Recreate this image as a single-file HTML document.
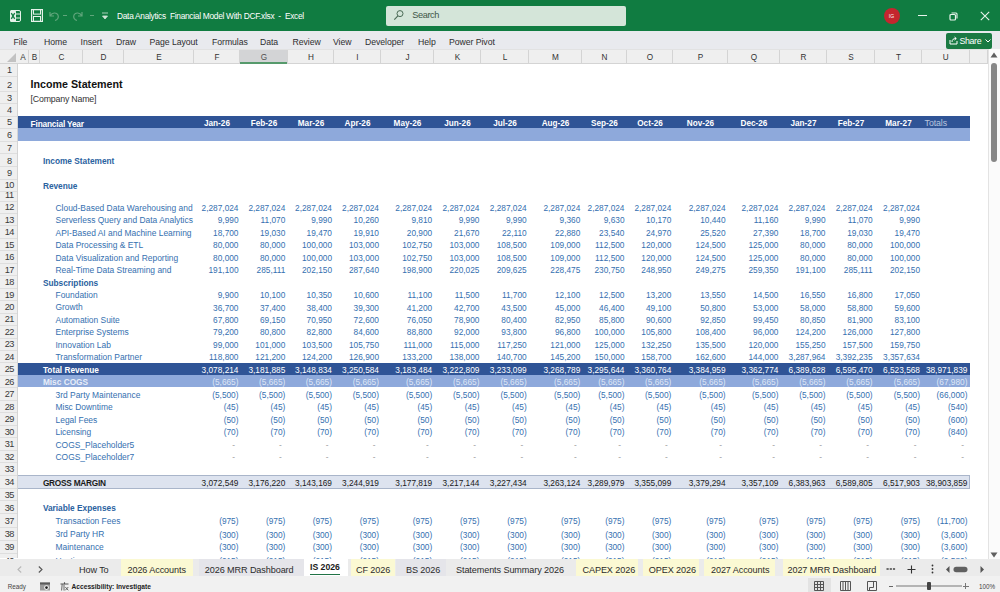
<!DOCTYPE html>
<html><head><meta charset="utf-8"><title>Excel</title>
<style>
html,body{margin:0;padding:0;}
body{width:1000px;height:592px;position:relative;overflow:hidden;background:#ffffff;font-family:"Liberation Sans", sans-serif;}
.r{position:absolute;}
.t{position:absolute;white-space:nowrap;}
</style></head><body>
<div class="r" style="left:0px;top:0px;width:1000px;height:31px;background:#107c41;"></div>
<svg class="r" style="left:10px;top:9.5px" width="11" height="12" viewBox="0 0 11 12"><rect x="0.5" y="0.5" width="10" height="11" rx="1.5" fill="none" stroke="#e6f2ea" stroke-width="1"/><rect x="0" y="0" width="6" height="12" rx="1.5" fill="#e6f2ea"/><path d="M1.3 3.2 L4.7 8.8 M4.7 3.2 L1.3 8.8" stroke="#107c41" stroke-width="1.3"/><path d="M6 4 H10 M6 8 H10" stroke="#e6f2ea" stroke-width="1"/></svg>
<svg class="r" style="left:31px;top:9px" width="12" height="13" viewBox="0 0 12 13"><rect x="0.6" y="0.6" width="10.8" height="11.8" fill="none" stroke="#e6f2ea" stroke-width="1.2"/><rect x="2.5" y="0.6" width="7" height="4.5" fill="none" stroke="#e6f2ea" stroke-width="1"/><rect x="2.5" y="7.5" width="7" height="4.9" fill="none" stroke="#e6f2ea" stroke-width="1"/></svg>
<svg class="r" style="left:47px;top:9px" width="64" height="13" viewBox="0 0 64 13"><path d="M3 3 V7 H7 M3.5 6.5 C5 3.5 9.5 3 11 6 C12 8.5 10.5 11 8 11.5" fill="none" stroke="#5fa57b" stroke-width="1.2"/><path d="M16 6.5 H20" stroke="#5fa57b" stroke-width="1"/><path d="M35 3 V7 H31 M34.5 6.5 C33 3.5 28.5 3 27 6 C26 8.5 27.5 11 30 11.5" fill="none" stroke="#5fa57b" stroke-width="1.2"/><path d="M43 6.5 H47" stroke="#5fa57b" stroke-width="1"/><path d="M55 4 H61 M55.5 7 L58 10 L60.5 7 Z" fill="#cfe5d7" stroke="#cfe5d7" stroke-width="0.8"/></svg>
<div class="t" style="left:117.00px;top:11.69px;font-size:8.4px;line-height:8.4px;color:#ffffff;letter-spacing:-0.3px;">Data Analytics &nbsp;Financial Model With DCF.xlsx &nbsp;- &nbsp;Excel</div>
<div class="r" style="left:385.5px;top:5.5px;width:240.0px;height:20.0px;background:#d4e5d9;border-radius:2px;"></div>
<svg class="r" style="left:393px;top:9px" width="11" height="12" viewBox="0 0 11 12"><circle cx="7" cy="4.6" r="3" fill="none" stroke="#4a6a55" stroke-width="1"/><path d="M4.9 6.8 L1.3 10.6" stroke="#4a6a55" stroke-width="1.1"/></svg>
<div class="t" style="left:412.30px;top:10.61px;font-size:9.2px;line-height:9.2px;color:#3d5646;letter-spacing:-0.4px;">Search</div>
<div class="r" style="left:883.5px;top:7.5px;width:16px;height:16px;border-radius:50%;background:#c4262e;"></div>
<div class="t" style="left:791.50px;width:200px;text-align:center;top:13.77px;font-size:5px;line-height:5px;color:#ffffff;">IG</div>
<div class="r" style="left:918px;top:15px;width:8.5px;height:1px;background:#e8f3ec;"></div>
<svg class="r" style="left:949px;top:11.5px" width="9" height="9" viewBox="0 0 9 9"><rect x="1" y="2.5" width="5.5" height="5.5" rx="1" fill="none" stroke="#e8f3ec" stroke-width="1.2"/><path d="M2.5 1 H7 A1 1 0 0 1 8 2 V6.5" fill="none" stroke="#e8f3ec" stroke-width="1.1"/></svg>
<svg class="r" style="left:980px;top:10.5px" width="10" height="10" viewBox="0 0 10 10"><path d="M0.8 0.8 L9.2 9.2 M9.2 0.8 L0.8 9.2" stroke="#e8f3ec" stroke-width="1.1"/></svg>
<div class="r" style="left:0px;top:31px;width:1000px;height:18px;background:#e9eaee;"></div>
<div class="t" style="left:13.50px;top:38.04px;font-size:8.7px;line-height:8.7px;color:#2e2e2e;letter-spacing:-0.05px;">File</div>
<div class="t" style="left:44.00px;top:38.04px;font-size:8.7px;line-height:8.7px;color:#2e2e2e;letter-spacing:-0.05px;">Home</div>
<div class="t" style="left:80.60px;top:38.04px;font-size:8.7px;line-height:8.7px;color:#2e2e2e;letter-spacing:-0.05px;">Insert</div>
<div class="t" style="left:116.00px;top:38.04px;font-size:8.7px;line-height:8.7px;color:#2e2e2e;letter-spacing:-0.05px;">Draw</div>
<div class="t" style="left:149.50px;top:38.04px;font-size:8.7px;line-height:8.7px;color:#2e2e2e;letter-spacing:-0.05px;">Page Layout</div>
<div class="t" style="left:212.00px;top:38.04px;font-size:8.7px;line-height:8.7px;color:#2e2e2e;letter-spacing:-0.05px;">Formulas</div>
<div class="t" style="left:260.00px;top:38.04px;font-size:8.7px;line-height:8.7px;color:#2e2e2e;letter-spacing:-0.05px;">Data</div>
<div class="t" style="left:292.50px;top:38.04px;font-size:8.7px;line-height:8.7px;color:#2e2e2e;letter-spacing:-0.05px;">Review</div>
<div class="t" style="left:333.00px;top:38.04px;font-size:8.7px;line-height:8.7px;color:#2e2e2e;letter-spacing:-0.05px;">View</div>
<div class="t" style="left:365.00px;top:38.04px;font-size:8.7px;line-height:8.7px;color:#2e2e2e;letter-spacing:-0.05px;">Developer</div>
<div class="t" style="left:418.00px;top:38.04px;font-size:8.7px;line-height:8.7px;color:#2e2e2e;letter-spacing:-0.05px;">Help</div>
<div class="t" style="left:449.00px;top:38.04px;font-size:8.7px;line-height:8.7px;color:#2e2e2e;letter-spacing:-0.05px;">Power Pivot</div>
<div class="r" style="left:946px;top:33px;width:46px;height:15.5px;background:#1a7a43;border-radius:2px;"></div>
<svg class="r" style="left:949px;top:36px" width="9" height="9" viewBox="0 0 9 9"><path d="M1 4 V8 H8 V5" fill="none" stroke="#ffffff" stroke-width="1"/><path d="M3 6 C3 3.5 4.5 2.5 7 2.5 M5.5 1 L7.3 2.5 L5.5 4" fill="none" stroke="#ffffff" stroke-width="1"/></svg>
<div class="t" style="left:959.50px;top:37.07px;font-size:8.9px;line-height:8.9px;color:#ffffff;letter-spacing:-0.4px;">Share</div>
<svg class="r" style="left:985px;top:39px" width="6" height="4" viewBox="0 0 6 4"><path d="M0.5 0.5 L3 3 L5.5 0.5" fill="none" stroke="#ffffff" stroke-width="1"/></svg>
<div class="r" style="left:0px;top:49px;width:988px;height:14.5px;background:#efefef;"></div>
<div class="r" style="left:0px;top:49px;width:988px;height:1px;background:#e2e2e2;"></div>
<div class="r" style="left:0px;top:63px;width:988px;height:1px;background:#d4d4d4;"></div>
<div class="r" style="left:28.3px;top:50px;width:1px;height:13.5px;background:#d4d4d4"></div>
<div class="t" style="left:-77.00px;width:200px;text-align:center;top:53.66px;font-size:8.2px;line-height:8.2px;color:#333333;">A</div>
<div class="r" style="left:39.3px;top:50px;width:1px;height:13.5px;background:#d4d4d4"></div>
<div class="t" style="left:-65.50px;width:200px;text-align:center;top:53.66px;font-size:8.2px;line-height:8.2px;color:#333333;">B</div>
<div class="r" style="left:82.3px;top:50px;width:1px;height:13.5px;background:#d4d4d4"></div>
<div class="t" style="left:-38.50px;width:200px;text-align:center;top:53.66px;font-size:8.2px;line-height:8.2px;color:#333333;">C</div>
<div class="r" style="left:123.3px;top:50px;width:1px;height:13.5px;background:#d4d4d4"></div>
<div class="t" style="left:3.50px;width:200px;text-align:center;top:53.66px;font-size:8.2px;line-height:8.2px;color:#333333;">D</div>
<div class="r" style="left:193.3px;top:50px;width:1px;height:13.5px;background:#d4d4d4"></div>
<div class="t" style="left:59.00px;width:200px;text-align:center;top:53.66px;font-size:8.2px;line-height:8.2px;color:#333333;">E</div>
<div class="r" style="left:239.3px;top:50px;width:1px;height:13.5px;background:#d4d4d4"></div>
<div class="t" style="left:117.00px;width:200px;text-align:center;top:53.66px;font-size:8.2px;line-height:8.2px;color:#333333;">F</div>
<div class="r" style="left:240px;top:50px;width:48px;height:12px;background:#d3d4d6;"></div>
<div class="r" style="left:240px;top:62px;width:48px;height:2px;background:#569a6c;"></div>
<div class="r" style="left:287.3px;top:50px;width:1px;height:13.5px;background:#d4d4d4"></div>
<div class="t" style="left:164.00px;width:200px;text-align:center;top:53.66px;font-size:8.2px;line-height:8.2px;color:#505050;">G</div>
<div class="r" style="left:333.3px;top:50px;width:1px;height:13.5px;background:#d4d4d4"></div>
<div class="t" style="left:211.00px;width:200px;text-align:center;top:53.66px;font-size:8.2px;line-height:8.2px;color:#333333;">H</div>
<div class="r" style="left:380.3px;top:50px;width:1px;height:13.5px;background:#d4d4d4"></div>
<div class="t" style="left:257.50px;width:200px;text-align:center;top:53.66px;font-size:8.2px;line-height:8.2px;color:#333333;">I</div>
<div class="r" style="left:433.3px;top:50px;width:1px;height:13.5px;background:#d4d4d4"></div>
<div class="t" style="left:307.50px;width:200px;text-align:center;top:53.66px;font-size:8.2px;line-height:8.2px;color:#333333;">J</div>
<div class="r" style="left:480.3px;top:50px;width:1px;height:13.5px;background:#d4d4d4"></div>
<div class="t" style="left:357.50px;width:200px;text-align:center;top:53.66px;font-size:8.2px;line-height:8.2px;color:#333333;">K</div>
<div class="r" style="left:528.3px;top:50px;width:1px;height:13.5px;background:#d4d4d4"></div>
<div class="t" style="left:405.00px;width:200px;text-align:center;top:53.66px;font-size:8.2px;line-height:8.2px;color:#333333;">L</div>
<div class="r" style="left:581.3px;top:50px;width:1px;height:13.5px;background:#d4d4d4"></div>
<div class="t" style="left:455.50px;width:200px;text-align:center;top:53.66px;font-size:8.2px;line-height:8.2px;color:#333333;">M</div>
<div class="r" style="left:626.3px;top:50px;width:1px;height:13.5px;background:#d4d4d4"></div>
<div class="t" style="left:504.50px;width:200px;text-align:center;top:53.66px;font-size:8.2px;line-height:8.2px;color:#333333;">N</div>
<div class="r" style="left:672.3px;top:50px;width:1px;height:13.5px;background:#d4d4d4"></div>
<div class="t" style="left:550.00px;width:200px;text-align:center;top:53.66px;font-size:8.2px;line-height:8.2px;color:#333333;">O</div>
<div class="r" style="left:727.3px;top:50px;width:1px;height:13.5px;background:#d4d4d4"></div>
<div class="t" style="left:600.50px;width:200px;text-align:center;top:53.66px;font-size:8.2px;line-height:8.2px;color:#333333;">P</div>
<div class="r" style="left:779.3px;top:50px;width:1px;height:13.5px;background:#d4d4d4"></div>
<div class="t" style="left:654.00px;width:200px;text-align:center;top:53.66px;font-size:8.2px;line-height:8.2px;color:#333333;">Q</div>
<div class="r" style="left:826.3px;top:50px;width:1px;height:13.5px;background:#d4d4d4"></div>
<div class="t" style="left:703.50px;width:200px;text-align:center;top:53.66px;font-size:8.2px;line-height:8.2px;color:#333333;">R</div>
<div class="r" style="left:874.3px;top:50px;width:1px;height:13.5px;background:#d4d4d4"></div>
<div class="t" style="left:751.00px;width:200px;text-align:center;top:53.66px;font-size:8.2px;line-height:8.2px;color:#333333;">S</div>
<div class="r" style="left:921.3px;top:50px;width:1px;height:13.5px;background:#d4d4d4"></div>
<div class="t" style="left:798.50px;width:200px;text-align:center;top:53.66px;font-size:8.2px;line-height:8.2px;color:#333333;">T</div>
<div class="r" style="left:968.8px;top:50px;width:1px;height:13.5px;background:#d4d4d4"></div>
<div class="t" style="left:845.75px;width:200px;text-align:center;top:53.66px;font-size:8.2px;line-height:8.2px;color:#333333;">U</div>
<div class="r" style="left:987.3px;top:50px;width:1px;height:13.5px;background:#d4d4d4"></div>
<svg class="r" style="left:7px;top:53px" width="9" height="9" viewBox="0 0 9 9"><path d="M9 0 L9 9 L0 9 Z" fill="#c2c2c2"/></svg>
<div class="r" style="left:0px;top:63.5px;width:17.5px;height:494.5px;background:#efefef;"></div>
<div class="r" style="left:17px;top:63.5px;width:1px;height:494.5px;background:#d4d4d4;"></div>
<div class="r" style="left:0px;top:75.8px;width:17px;height:1px;background:#dedede"></div>
<div class="t" style="left:-90.70px;width:200px;text-align:center;top:66.21px;font-size:9.2px;line-height:9.2px;color:#3a3a3a;letter-spacing:-0.45px;">1</div>
<div class="r" style="left:0px;top:90.8px;width:17px;height:1px;background:#dedede"></div>
<div class="t" style="left:-90.70px;width:200px;text-align:center;top:80.51px;font-size:9.2px;line-height:9.2px;color:#3a3a3a;letter-spacing:-0.45px;">2</div>
<div class="r" style="left:0px;top:103.3px;width:17px;height:1px;background:#dedede"></div>
<div class="t" style="left:-90.70px;width:200px;text-align:center;top:93.71px;font-size:9.2px;line-height:9.2px;color:#3a3a3a;letter-spacing:-0.45px;">3</div>
<div class="r" style="left:0px;top:115.8px;width:17px;height:1px;background:#dedede"></div>
<div class="t" style="left:-90.70px;width:200px;text-align:center;top:106.21px;font-size:9.2px;line-height:9.2px;color:#3a3a3a;letter-spacing:-0.45px;">4</div>
<div class="r" style="left:0px;top:128.0px;width:17px;height:1px;background:#dedede"></div>
<div class="t" style="left:-90.70px;width:200px;text-align:center;top:118.41px;font-size:9.2px;line-height:9.2px;color:#3a3a3a;letter-spacing:-0.45px;">5</div>
<div class="r" style="left:0px;top:140.6px;width:17px;height:1px;background:#dedede"></div>
<div class="t" style="left:-90.70px;width:200px;text-align:center;top:131.01px;font-size:9.2px;line-height:9.2px;color:#3a3a3a;letter-spacing:-0.45px;">6</div>
<div class="r" style="left:0px;top:153.3px;width:17px;height:1px;background:#dedede"></div>
<div class="t" style="left:-90.70px;width:200px;text-align:center;top:143.71px;font-size:9.2px;line-height:9.2px;color:#3a3a3a;letter-spacing:-0.45px;">7</div>
<div class="r" style="left:0px;top:166.3px;width:17px;height:1px;background:#dedede"></div>
<div class="t" style="left:-90.70px;width:200px;text-align:center;top:156.71px;font-size:9.2px;line-height:9.2px;color:#3a3a3a;letter-spacing:-0.45px;">8</div>
<div class="r" style="left:0px;top:178.6px;width:17px;height:1px;background:#dedede"></div>
<div class="t" style="left:-90.70px;width:200px;text-align:center;top:169.01px;font-size:9.2px;line-height:9.2px;color:#3a3a3a;letter-spacing:-0.45px;">9</div>
<div class="r" style="left:0px;top:190.9px;width:17px;height:1px;background:#dedede"></div>
<div class="t" style="left:-90.70px;width:200px;text-align:center;top:181.31px;font-size:9.2px;line-height:9.2px;color:#3a3a3a;letter-spacing:-0.45px;">10</div>
<div class="r" style="left:0px;top:200.5px;width:17px;height:1px;background:#dedede"></div>
<div class="t" style="left:-90.70px;width:200px;text-align:center;top:190.91px;font-size:9.2px;line-height:9.2px;color:#3a3a3a;letter-spacing:-0.45px;">11</div>
<div class="r" style="left:0px;top:212.8px;width:17px;height:1px;background:#dedede"></div>
<div class="t" style="left:-90.70px;width:200px;text-align:center;top:203.21px;font-size:9.2px;line-height:9.2px;color:#3a3a3a;letter-spacing:-0.45px;">12</div>
<div class="r" style="left:0px;top:225.3px;width:17px;height:1px;background:#dedede"></div>
<div class="t" style="left:-90.70px;width:200px;text-align:center;top:215.68px;font-size:9.2px;line-height:9.2px;color:#3a3a3a;letter-spacing:-0.45px;">13</div>
<div class="r" style="left:0px;top:237.7px;width:17px;height:1px;background:#dedede"></div>
<div class="t" style="left:-90.70px;width:200px;text-align:center;top:228.15px;font-size:9.2px;line-height:9.2px;color:#3a3a3a;letter-spacing:-0.45px;">14</div>
<div class="r" style="left:0px;top:250.2px;width:17px;height:1px;background:#dedede"></div>
<div class="t" style="left:-90.70px;width:200px;text-align:center;top:240.62px;font-size:9.2px;line-height:9.2px;color:#3a3a3a;letter-spacing:-0.45px;">15</div>
<div class="r" style="left:0px;top:262.7px;width:17px;height:1px;background:#dedede"></div>
<div class="t" style="left:-90.70px;width:200px;text-align:center;top:253.09px;font-size:9.2px;line-height:9.2px;color:#3a3a3a;letter-spacing:-0.45px;">16</div>
<div class="r" style="left:0px;top:275.2px;width:17px;height:1px;background:#dedede"></div>
<div class="t" style="left:-90.70px;width:200px;text-align:center;top:265.56px;font-size:9.2px;line-height:9.2px;color:#3a3a3a;letter-spacing:-0.45px;">17</div>
<div class="r" style="left:0px;top:287.6px;width:17px;height:1px;background:#dedede"></div>
<div class="t" style="left:-90.70px;width:200px;text-align:center;top:278.03px;font-size:9.2px;line-height:9.2px;color:#3a3a3a;letter-spacing:-0.45px;">18</div>
<div class="r" style="left:0px;top:300.1px;width:17px;height:1px;background:#dedede"></div>
<div class="t" style="left:-90.70px;width:200px;text-align:center;top:290.50px;font-size:9.2px;line-height:9.2px;color:#3a3a3a;letter-spacing:-0.45px;">19</div>
<div class="r" style="left:0px;top:312.6px;width:17px;height:1px;background:#dedede"></div>
<div class="t" style="left:-90.70px;width:200px;text-align:center;top:302.97px;font-size:9.2px;line-height:9.2px;color:#3a3a3a;letter-spacing:-0.45px;">20</div>
<div class="r" style="left:0px;top:325.0px;width:17px;height:1px;background:#dedede"></div>
<div class="t" style="left:-90.70px;width:200px;text-align:center;top:315.44px;font-size:9.2px;line-height:9.2px;color:#3a3a3a;letter-spacing:-0.45px;">21</div>
<div class="r" style="left:0px;top:337.5px;width:17px;height:1px;background:#dedede"></div>
<div class="t" style="left:-90.70px;width:200px;text-align:center;top:327.91px;font-size:9.2px;line-height:9.2px;color:#3a3a3a;letter-spacing:-0.45px;">22</div>
<div class="r" style="left:0px;top:350.0px;width:17px;height:1px;background:#dedede"></div>
<div class="t" style="left:-90.70px;width:200px;text-align:center;top:340.38px;font-size:9.2px;line-height:9.2px;color:#3a3a3a;letter-spacing:-0.45px;">23</div>
<div class="r" style="left:0px;top:362.4px;width:17px;height:1px;background:#dedede"></div>
<div class="t" style="left:-90.70px;width:200px;text-align:center;top:352.85px;font-size:9.2px;line-height:9.2px;color:#3a3a3a;letter-spacing:-0.45px;">24</div>
<div class="r" style="left:0px;top:374.9px;width:17px;height:1px;background:#dedede"></div>
<div class="t" style="left:-90.70px;width:200px;text-align:center;top:365.32px;font-size:9.2px;line-height:9.2px;color:#3a3a3a;letter-spacing:-0.45px;">25</div>
<div class="r" style="left:0px;top:387.4px;width:17px;height:1px;background:#dedede"></div>
<div class="t" style="left:-90.70px;width:200px;text-align:center;top:377.79px;font-size:9.2px;line-height:9.2px;color:#3a3a3a;letter-spacing:-0.45px;">26</div>
<div class="r" style="left:0px;top:399.9px;width:17px;height:1px;background:#dedede"></div>
<div class="t" style="left:-90.70px;width:200px;text-align:center;top:390.26px;font-size:9.2px;line-height:9.2px;color:#3a3a3a;letter-spacing:-0.45px;">27</div>
<div class="r" style="left:0px;top:412.3px;width:17px;height:1px;background:#dedede"></div>
<div class="t" style="left:-90.70px;width:200px;text-align:center;top:402.73px;font-size:9.2px;line-height:9.2px;color:#3a3a3a;letter-spacing:-0.45px;">28</div>
<div class="r" style="left:0px;top:424.8px;width:17px;height:1px;background:#dedede"></div>
<div class="t" style="left:-90.70px;width:200px;text-align:center;top:415.20px;font-size:9.2px;line-height:9.2px;color:#3a3a3a;letter-spacing:-0.45px;">29</div>
<div class="r" style="left:0px;top:437.3px;width:17px;height:1px;background:#dedede"></div>
<div class="t" style="left:-90.70px;width:200px;text-align:center;top:427.67px;font-size:9.2px;line-height:9.2px;color:#3a3a3a;letter-spacing:-0.45px;">30</div>
<div class="r" style="left:0px;top:449.7px;width:17px;height:1px;background:#dedede"></div>
<div class="t" style="left:-90.70px;width:200px;text-align:center;top:440.14px;font-size:9.2px;line-height:9.2px;color:#3a3a3a;letter-spacing:-0.45px;">31</div>
<div class="r" style="left:0px;top:462.2px;width:17px;height:1px;background:#dedede"></div>
<div class="t" style="left:-90.70px;width:200px;text-align:center;top:452.61px;font-size:9.2px;line-height:9.2px;color:#3a3a3a;letter-spacing:-0.45px;">32</div>
<div class="r" style="left:0px;top:474.7px;width:17px;height:1px;background:#dedede"></div>
<div class="t" style="left:-90.70px;width:200px;text-align:center;top:465.11px;font-size:9.2px;line-height:9.2px;color:#3a3a3a;letter-spacing:-0.45px;">33</div>
<div class="r" style="left:0px;top:487.6px;width:17px;height:1px;background:#dedede"></div>
<div class="t" style="left:-90.70px;width:200px;text-align:center;top:478.01px;font-size:9.2px;line-height:9.2px;color:#3a3a3a;letter-spacing:-0.45px;">34</div>
<div class="r" style="left:0px;top:500.3px;width:17px;height:1px;background:#dedede"></div>
<div class="t" style="left:-90.70px;width:200px;text-align:center;top:490.71px;font-size:9.2px;line-height:9.2px;color:#3a3a3a;letter-spacing:-0.45px;">35</div>
<div class="r" style="left:0px;top:513.3px;width:17px;height:1px;background:#dedede"></div>
<div class="t" style="left:-90.70px;width:200px;text-align:center;top:503.71px;font-size:9.2px;line-height:9.2px;color:#3a3a3a;letter-spacing:-0.45px;">36</div>
<div class="r" style="left:0px;top:526.5px;width:17px;height:1px;background:#dedede"></div>
<div class="t" style="left:-90.70px;width:200px;text-align:center;top:516.91px;font-size:9.2px;line-height:9.2px;color:#3a3a3a;letter-spacing:-0.45px;">37</div>
<div class="r" style="left:0px;top:539.6px;width:17px;height:1px;background:#dedede"></div>
<div class="t" style="left:-90.70px;width:200px;text-align:center;top:530.01px;font-size:9.2px;line-height:9.2px;color:#3a3a3a;letter-spacing:-0.45px;">38</div>
<div class="r" style="left:0px;top:552.5px;width:17px;height:1px;background:#dedede"></div>
<div class="t" style="left:-90.70px;width:200px;text-align:center;top:542.91px;font-size:9.2px;line-height:9.2px;color:#3a3a3a;letter-spacing:-0.45px;">39</div>
<div class="r" style="left:0px;top:566.1px;width:17px;height:1px;background:#dedede"></div>
<div class="t" style="left:-90.70px;width:200px;text-align:center;top:556.51px;font-size:9.2px;line-height:9.2px;color:#3a3a3a;letter-spacing:-0.45px;">40</div>
<div class="r" style="left:18px;top:64px;width:970px;height:494px;background:#ffffff;"></div>
<div class="r" style="left:17.5px;top:116px;width:952.0px;height:12.400000000000006px;background:#2f5496;"></div>
<div class="r" style="left:17.5px;top:128.4px;width:952.0px;height:12.599999999999994px;background:#8ea9db;"></div>
<div class="r" style="left:17.5px;top:363px;width:952.0px;height:12px;background:#2f5496;"></div>
<div class="r" style="left:17.5px;top:375px;width:952.0px;height:12px;background:#8ea9db;"></div>
<div class="r" style="left:17.5px;top:475px;width:952.0px;height:14px;background:#dde3ef;border-top:1px solid #a9b5ca;border-bottom:1px solid #a9b5ca;border-right:1px solid #a9b5ca;box-sizing:border-box;"></div>
<div class="t" style="left:30.60px;top:79.04px;font-size:10.7px;line-height:10.7px;color:#111111;font-weight:700;">Income Statement</div>
<div class="t" style="left:30.60px;top:94.55px;font-size:8.8px;line-height:8.8px;color:#333333;letter-spacing:-0.2px;">[Company Name]</div>
<div class="t" style="left:30.60px;top:120.17px;font-size:8.3px;line-height:8.3px;color:#ffffff;font-weight:700;letter-spacing:-0.17px;">Financial Year</div>
<div class="t" style="left:117.00px;width:200px;text-align:center;top:120.26px;font-size:8.2px;line-height:8.2px;color:#ffffff;font-weight:700;">Jan-26</div>
<div class="t" style="left:164.00px;width:200px;text-align:center;top:120.26px;font-size:8.2px;line-height:8.2px;color:#ffffff;font-weight:700;">Feb-26</div>
<div class="t" style="left:211.00px;width:200px;text-align:center;top:120.26px;font-size:8.2px;line-height:8.2px;color:#ffffff;font-weight:700;">Mar-26</div>
<div class="t" style="left:257.50px;width:200px;text-align:center;top:120.26px;font-size:8.2px;line-height:8.2px;color:#ffffff;font-weight:700;">Apr-26</div>
<div class="t" style="left:307.50px;width:200px;text-align:center;top:120.26px;font-size:8.2px;line-height:8.2px;color:#ffffff;font-weight:700;">May-26</div>
<div class="t" style="left:357.50px;width:200px;text-align:center;top:120.26px;font-size:8.2px;line-height:8.2px;color:#ffffff;font-weight:700;">Jun-26</div>
<div class="t" style="left:405.00px;width:200px;text-align:center;top:120.26px;font-size:8.2px;line-height:8.2px;color:#ffffff;font-weight:700;">Jul-26</div>
<div class="t" style="left:455.50px;width:200px;text-align:center;top:120.26px;font-size:8.2px;line-height:8.2px;color:#ffffff;font-weight:700;">Aug-26</div>
<div class="t" style="left:504.50px;width:200px;text-align:center;top:120.26px;font-size:8.2px;line-height:8.2px;color:#ffffff;font-weight:700;">Sep-26</div>
<div class="t" style="left:550.00px;width:200px;text-align:center;top:120.26px;font-size:8.2px;line-height:8.2px;color:#ffffff;font-weight:700;">Oct-26</div>
<div class="t" style="left:600.50px;width:200px;text-align:center;top:120.26px;font-size:8.2px;line-height:8.2px;color:#ffffff;font-weight:700;">Nov-26</div>
<div class="t" style="left:654.00px;width:200px;text-align:center;top:120.26px;font-size:8.2px;line-height:8.2px;color:#ffffff;font-weight:700;">Dec-26</div>
<div class="t" style="left:703.50px;width:200px;text-align:center;top:120.26px;font-size:8.2px;line-height:8.2px;color:#ffffff;font-weight:700;">Jan-27</div>
<div class="t" style="left:751.00px;width:200px;text-align:center;top:120.26px;font-size:8.2px;line-height:8.2px;color:#ffffff;font-weight:700;">Feb-27</div>
<div class="t" style="left:798.50px;width:200px;text-align:center;top:120.26px;font-size:8.2px;line-height:8.2px;color:#ffffff;font-weight:700;">Mar-27</div>
<div class="t" style="left:924.60px;top:119.05px;font-size:8.8px;line-height:8.8px;color:#b9c6df;letter-spacing:-0.1px;">Totals</div>
<div class="t" style="left:42.90px;top:157.27px;font-size:8.3px;line-height:8.3px;color:#2a62a0;font-weight:700;">Income Statement</div>
<div class="t" style="left:42.90px;top:181.87px;font-size:8.3px;line-height:8.3px;color:#2a62a0;font-weight:700;">Revenue</div>
<div class="t" style="left:55.50px;top:203.65px;font-size:8.45px;line-height:8.45px;color:#3570b0;">Cloud-Based Data Warehousing and</div>
<div class="t" style="right:761.50px;top:203.77px;font-size:8.3px;line-height:8.3px;color:#3570b0;">2,287,024</div>
<div class="t" style="right:714.70px;top:203.77px;font-size:8.3px;line-height:8.3px;color:#3570b0;">2,287,024</div>
<div class="t" style="right:668.00px;top:203.77px;font-size:8.3px;line-height:8.3px;color:#3570b0;">2,287,024</div>
<div class="t" style="right:621.00px;top:203.77px;font-size:8.3px;line-height:8.3px;color:#3570b0;">2,287,024</div>
<div class="t" style="right:567.80px;top:203.77px;font-size:8.3px;line-height:8.3px;color:#3570b0;">2,287,024</div>
<div class="t" style="right:520.60px;top:203.77px;font-size:8.3px;line-height:8.3px;color:#3570b0;">2,287,024</div>
<div class="t" style="right:473.30px;top:203.77px;font-size:8.3px;line-height:8.3px;color:#3570b0;">2,287,024</div>
<div class="t" style="right:419.70px;top:203.77px;font-size:8.3px;line-height:8.3px;color:#3570b0;">2,287,024</div>
<div class="t" style="right:375.50px;top:203.77px;font-size:8.3px;line-height:8.3px;color:#3570b0;">2,287,024</div>
<div class="t" style="right:328.70px;top:203.77px;font-size:8.3px;line-height:8.3px;color:#3570b0;">2,287,024</div>
<div class="t" style="right:274.40px;top:203.77px;font-size:8.3px;line-height:8.3px;color:#3570b0;">2,287,024</div>
<div class="t" style="right:221.60px;top:203.77px;font-size:8.3px;line-height:8.3px;color:#3570b0;">2,287,024</div>
<div class="t" style="right:174.50px;top:203.77px;font-size:8.3px;line-height:8.3px;color:#3570b0;">2,287,024</div>
<div class="t" style="right:127.40px;top:203.77px;font-size:8.3px;line-height:8.3px;color:#3570b0;">2,287,024</div>
<div class="t" style="right:80.00px;top:203.77px;font-size:8.3px;line-height:8.3px;color:#3570b0;">2,287,024</div>
<div class="t" style="left:55.50px;top:216.12px;font-size:8.45px;line-height:8.45px;color:#3570b0;">Serverless Query and Data Analytics</div>
<div class="t" style="right:761.50px;top:216.24px;font-size:8.3px;line-height:8.3px;color:#3570b0;">9,990</div>
<div class="t" style="right:714.70px;top:216.24px;font-size:8.3px;line-height:8.3px;color:#3570b0;">11,070</div>
<div class="t" style="right:668.00px;top:216.24px;font-size:8.3px;line-height:8.3px;color:#3570b0;">9,990</div>
<div class="t" style="right:621.00px;top:216.24px;font-size:8.3px;line-height:8.3px;color:#3570b0;">10,260</div>
<div class="t" style="right:567.80px;top:216.24px;font-size:8.3px;line-height:8.3px;color:#3570b0;">9,810</div>
<div class="t" style="right:520.60px;top:216.24px;font-size:8.3px;line-height:8.3px;color:#3570b0;">9,990</div>
<div class="t" style="right:473.30px;top:216.24px;font-size:8.3px;line-height:8.3px;color:#3570b0;">9,990</div>
<div class="t" style="right:419.70px;top:216.24px;font-size:8.3px;line-height:8.3px;color:#3570b0;">9,360</div>
<div class="t" style="right:375.50px;top:216.24px;font-size:8.3px;line-height:8.3px;color:#3570b0;">9,630</div>
<div class="t" style="right:328.70px;top:216.24px;font-size:8.3px;line-height:8.3px;color:#3570b0;">10,170</div>
<div class="t" style="right:274.40px;top:216.24px;font-size:8.3px;line-height:8.3px;color:#3570b0;">10,440</div>
<div class="t" style="right:221.60px;top:216.24px;font-size:8.3px;line-height:8.3px;color:#3570b0;">11,160</div>
<div class="t" style="right:174.50px;top:216.24px;font-size:8.3px;line-height:8.3px;color:#3570b0;">9,990</div>
<div class="t" style="right:127.40px;top:216.24px;font-size:8.3px;line-height:8.3px;color:#3570b0;">11,070</div>
<div class="t" style="right:80.00px;top:216.24px;font-size:8.3px;line-height:8.3px;color:#3570b0;">9,990</div>
<div class="t" style="left:55.50px;top:228.59px;font-size:8.45px;line-height:8.45px;color:#3570b0;">API-Based AI and Machine Learning</div>
<div class="t" style="right:761.50px;top:228.71px;font-size:8.3px;line-height:8.3px;color:#3570b0;">18,700</div>
<div class="t" style="right:714.70px;top:228.71px;font-size:8.3px;line-height:8.3px;color:#3570b0;">19,030</div>
<div class="t" style="right:668.00px;top:228.71px;font-size:8.3px;line-height:8.3px;color:#3570b0;">19,470</div>
<div class="t" style="right:621.00px;top:228.71px;font-size:8.3px;line-height:8.3px;color:#3570b0;">19,910</div>
<div class="t" style="right:567.80px;top:228.71px;font-size:8.3px;line-height:8.3px;color:#3570b0;">20,900</div>
<div class="t" style="right:520.60px;top:228.71px;font-size:8.3px;line-height:8.3px;color:#3570b0;">21,670</div>
<div class="t" style="right:473.30px;top:228.71px;font-size:8.3px;line-height:8.3px;color:#3570b0;">22,110</div>
<div class="t" style="right:419.70px;top:228.71px;font-size:8.3px;line-height:8.3px;color:#3570b0;">22,880</div>
<div class="t" style="right:375.50px;top:228.71px;font-size:8.3px;line-height:8.3px;color:#3570b0;">23,540</div>
<div class="t" style="right:328.70px;top:228.71px;font-size:8.3px;line-height:8.3px;color:#3570b0;">24,970</div>
<div class="t" style="right:274.40px;top:228.71px;font-size:8.3px;line-height:8.3px;color:#3570b0;">25,520</div>
<div class="t" style="right:221.60px;top:228.71px;font-size:8.3px;line-height:8.3px;color:#3570b0;">27,390</div>
<div class="t" style="right:174.50px;top:228.71px;font-size:8.3px;line-height:8.3px;color:#3570b0;">18,700</div>
<div class="t" style="right:127.40px;top:228.71px;font-size:8.3px;line-height:8.3px;color:#3570b0;">19,030</div>
<div class="t" style="right:80.00px;top:228.71px;font-size:8.3px;line-height:8.3px;color:#3570b0;">19,470</div>
<div class="t" style="left:55.50px;top:241.06px;font-size:8.45px;line-height:8.45px;color:#3570b0;">Data Processing &amp; ETL</div>
<div class="t" style="right:761.50px;top:241.18px;font-size:8.3px;line-height:8.3px;color:#3570b0;">80,000</div>
<div class="t" style="right:714.70px;top:241.18px;font-size:8.3px;line-height:8.3px;color:#3570b0;">80,000</div>
<div class="t" style="right:668.00px;top:241.18px;font-size:8.3px;line-height:8.3px;color:#3570b0;">100,000</div>
<div class="t" style="right:621.00px;top:241.18px;font-size:8.3px;line-height:8.3px;color:#3570b0;">103,000</div>
<div class="t" style="right:567.80px;top:241.18px;font-size:8.3px;line-height:8.3px;color:#3570b0;">102,750</div>
<div class="t" style="right:520.60px;top:241.18px;font-size:8.3px;line-height:8.3px;color:#3570b0;">103,000</div>
<div class="t" style="right:473.30px;top:241.18px;font-size:8.3px;line-height:8.3px;color:#3570b0;">108,500</div>
<div class="t" style="right:419.70px;top:241.18px;font-size:8.3px;line-height:8.3px;color:#3570b0;">109,000</div>
<div class="t" style="right:375.50px;top:241.18px;font-size:8.3px;line-height:8.3px;color:#3570b0;">112,500</div>
<div class="t" style="right:328.70px;top:241.18px;font-size:8.3px;line-height:8.3px;color:#3570b0;">120,000</div>
<div class="t" style="right:274.40px;top:241.18px;font-size:8.3px;line-height:8.3px;color:#3570b0;">124,500</div>
<div class="t" style="right:221.60px;top:241.18px;font-size:8.3px;line-height:8.3px;color:#3570b0;">125,000</div>
<div class="t" style="right:174.50px;top:241.18px;font-size:8.3px;line-height:8.3px;color:#3570b0;">80,000</div>
<div class="t" style="right:127.40px;top:241.18px;font-size:8.3px;line-height:8.3px;color:#3570b0;">80,000</div>
<div class="t" style="right:80.00px;top:241.18px;font-size:8.3px;line-height:8.3px;color:#3570b0;">100,000</div>
<div class="t" style="left:55.50px;top:253.53px;font-size:8.45px;line-height:8.45px;color:#3570b0;">Data Visualization and Reporting</div>
<div class="t" style="right:761.50px;top:253.65px;font-size:8.3px;line-height:8.3px;color:#3570b0;">80,000</div>
<div class="t" style="right:714.70px;top:253.65px;font-size:8.3px;line-height:8.3px;color:#3570b0;">80,000</div>
<div class="t" style="right:668.00px;top:253.65px;font-size:8.3px;line-height:8.3px;color:#3570b0;">100,000</div>
<div class="t" style="right:621.00px;top:253.65px;font-size:8.3px;line-height:8.3px;color:#3570b0;">103,000</div>
<div class="t" style="right:567.80px;top:253.65px;font-size:8.3px;line-height:8.3px;color:#3570b0;">102,750</div>
<div class="t" style="right:520.60px;top:253.65px;font-size:8.3px;line-height:8.3px;color:#3570b0;">103,000</div>
<div class="t" style="right:473.30px;top:253.65px;font-size:8.3px;line-height:8.3px;color:#3570b0;">108,500</div>
<div class="t" style="right:419.70px;top:253.65px;font-size:8.3px;line-height:8.3px;color:#3570b0;">109,000</div>
<div class="t" style="right:375.50px;top:253.65px;font-size:8.3px;line-height:8.3px;color:#3570b0;">112,500</div>
<div class="t" style="right:328.70px;top:253.65px;font-size:8.3px;line-height:8.3px;color:#3570b0;">120,000</div>
<div class="t" style="right:274.40px;top:253.65px;font-size:8.3px;line-height:8.3px;color:#3570b0;">124,500</div>
<div class="t" style="right:221.60px;top:253.65px;font-size:8.3px;line-height:8.3px;color:#3570b0;">125,000</div>
<div class="t" style="right:174.50px;top:253.65px;font-size:8.3px;line-height:8.3px;color:#3570b0;">80,000</div>
<div class="t" style="right:127.40px;top:253.65px;font-size:8.3px;line-height:8.3px;color:#3570b0;">80,000</div>
<div class="t" style="right:80.00px;top:253.65px;font-size:8.3px;line-height:8.3px;color:#3570b0;">100,000</div>
<div class="t" style="left:55.50px;top:266.00px;font-size:8.45px;line-height:8.45px;color:#3570b0;">Real-Time Data Streaming and</div>
<div class="t" style="right:761.50px;top:266.12px;font-size:8.3px;line-height:8.3px;color:#3570b0;">191,100</div>
<div class="t" style="right:714.70px;top:266.12px;font-size:8.3px;line-height:8.3px;color:#3570b0;">285,111</div>
<div class="t" style="right:668.00px;top:266.12px;font-size:8.3px;line-height:8.3px;color:#3570b0;">202,150</div>
<div class="t" style="right:621.00px;top:266.12px;font-size:8.3px;line-height:8.3px;color:#3570b0;">287,640</div>
<div class="t" style="right:567.80px;top:266.12px;font-size:8.3px;line-height:8.3px;color:#3570b0;">198,900</div>
<div class="t" style="right:520.60px;top:266.12px;font-size:8.3px;line-height:8.3px;color:#3570b0;">220,025</div>
<div class="t" style="right:473.30px;top:266.12px;font-size:8.3px;line-height:8.3px;color:#3570b0;">209,625</div>
<div class="t" style="right:419.70px;top:266.12px;font-size:8.3px;line-height:8.3px;color:#3570b0;">228,475</div>
<div class="t" style="right:375.50px;top:266.12px;font-size:8.3px;line-height:8.3px;color:#3570b0;">230,750</div>
<div class="t" style="right:328.70px;top:266.12px;font-size:8.3px;line-height:8.3px;color:#3570b0;">248,950</div>
<div class="t" style="right:274.40px;top:266.12px;font-size:8.3px;line-height:8.3px;color:#3570b0;">249,275</div>
<div class="t" style="right:221.60px;top:266.12px;font-size:8.3px;line-height:8.3px;color:#3570b0;">259,350</div>
<div class="t" style="right:174.50px;top:266.12px;font-size:8.3px;line-height:8.3px;color:#3570b0;">191,100</div>
<div class="t" style="right:127.40px;top:266.12px;font-size:8.3px;line-height:8.3px;color:#3570b0;">285,111</div>
<div class="t" style="right:80.00px;top:266.12px;font-size:8.3px;line-height:8.3px;color:#3570b0;">202,150</div>
<div class="t" style="left:42.90px;top:278.59px;font-size:8.3px;line-height:8.3px;color:#2a62a0;font-weight:700;">Subscriptions</div>
<div class="t" style="left:55.50px;top:290.94px;font-size:8.45px;line-height:8.45px;color:#3570b0;">Foundation</div>
<div class="t" style="right:761.50px;top:291.06px;font-size:8.3px;line-height:8.3px;color:#3570b0;">9,900</div>
<div class="t" style="right:714.70px;top:291.06px;font-size:8.3px;line-height:8.3px;color:#3570b0;">10,100</div>
<div class="t" style="right:668.00px;top:291.06px;font-size:8.3px;line-height:8.3px;color:#3570b0;">10,350</div>
<div class="t" style="right:621.00px;top:291.06px;font-size:8.3px;line-height:8.3px;color:#3570b0;">10,600</div>
<div class="t" style="right:567.80px;top:291.06px;font-size:8.3px;line-height:8.3px;color:#3570b0;">11,100</div>
<div class="t" style="right:520.60px;top:291.06px;font-size:8.3px;line-height:8.3px;color:#3570b0;">11,500</div>
<div class="t" style="right:473.30px;top:291.06px;font-size:8.3px;line-height:8.3px;color:#3570b0;">11,700</div>
<div class="t" style="right:419.70px;top:291.06px;font-size:8.3px;line-height:8.3px;color:#3570b0;">12,100</div>
<div class="t" style="right:375.50px;top:291.06px;font-size:8.3px;line-height:8.3px;color:#3570b0;">12,500</div>
<div class="t" style="right:328.70px;top:291.06px;font-size:8.3px;line-height:8.3px;color:#3570b0;">13,200</div>
<div class="t" style="right:274.40px;top:291.06px;font-size:8.3px;line-height:8.3px;color:#3570b0;">13,550</div>
<div class="t" style="right:221.60px;top:291.06px;font-size:8.3px;line-height:8.3px;color:#3570b0;">14,500</div>
<div class="t" style="right:174.50px;top:291.06px;font-size:8.3px;line-height:8.3px;color:#3570b0;">16,550</div>
<div class="t" style="right:127.40px;top:291.06px;font-size:8.3px;line-height:8.3px;color:#3570b0;">16,800</div>
<div class="t" style="right:80.00px;top:291.06px;font-size:8.3px;line-height:8.3px;color:#3570b0;">17,050</div>
<div class="t" style="left:55.50px;top:303.41px;font-size:8.45px;line-height:8.45px;color:#3570b0;">Growth</div>
<div class="t" style="right:761.50px;top:303.53px;font-size:8.3px;line-height:8.3px;color:#3570b0;">36,700</div>
<div class="t" style="right:714.70px;top:303.53px;font-size:8.3px;line-height:8.3px;color:#3570b0;">37,400</div>
<div class="t" style="right:668.00px;top:303.53px;font-size:8.3px;line-height:8.3px;color:#3570b0;">38,400</div>
<div class="t" style="right:621.00px;top:303.53px;font-size:8.3px;line-height:8.3px;color:#3570b0;">39,300</div>
<div class="t" style="right:567.80px;top:303.53px;font-size:8.3px;line-height:8.3px;color:#3570b0;">41,200</div>
<div class="t" style="right:520.60px;top:303.53px;font-size:8.3px;line-height:8.3px;color:#3570b0;">42,700</div>
<div class="t" style="right:473.30px;top:303.53px;font-size:8.3px;line-height:8.3px;color:#3570b0;">43,500</div>
<div class="t" style="right:419.70px;top:303.53px;font-size:8.3px;line-height:8.3px;color:#3570b0;">45,000</div>
<div class="t" style="right:375.50px;top:303.53px;font-size:8.3px;line-height:8.3px;color:#3570b0;">46,400</div>
<div class="t" style="right:328.70px;top:303.53px;font-size:8.3px;line-height:8.3px;color:#3570b0;">49,100</div>
<div class="t" style="right:274.40px;top:303.53px;font-size:8.3px;line-height:8.3px;color:#3570b0;">50,800</div>
<div class="t" style="right:221.60px;top:303.53px;font-size:8.3px;line-height:8.3px;color:#3570b0;">53,000</div>
<div class="t" style="right:174.50px;top:303.53px;font-size:8.3px;line-height:8.3px;color:#3570b0;">58,000</div>
<div class="t" style="right:127.40px;top:303.53px;font-size:8.3px;line-height:8.3px;color:#3570b0;">58,800</div>
<div class="t" style="right:80.00px;top:303.53px;font-size:8.3px;line-height:8.3px;color:#3570b0;">59,600</div>
<div class="t" style="left:55.50px;top:315.88px;font-size:8.45px;line-height:8.45px;color:#3570b0;">Automation Suite</div>
<div class="t" style="right:761.50px;top:316.00px;font-size:8.3px;line-height:8.3px;color:#3570b0;">67,800</div>
<div class="t" style="right:714.70px;top:316.00px;font-size:8.3px;line-height:8.3px;color:#3570b0;">69,150</div>
<div class="t" style="right:668.00px;top:316.00px;font-size:8.3px;line-height:8.3px;color:#3570b0;">70,950</div>
<div class="t" style="right:621.00px;top:316.00px;font-size:8.3px;line-height:8.3px;color:#3570b0;">72,600</div>
<div class="t" style="right:567.80px;top:316.00px;font-size:8.3px;line-height:8.3px;color:#3570b0;">76,050</div>
<div class="t" style="right:520.60px;top:316.00px;font-size:8.3px;line-height:8.3px;color:#3570b0;">78,900</div>
<div class="t" style="right:473.30px;top:316.00px;font-size:8.3px;line-height:8.3px;color:#3570b0;">80,400</div>
<div class="t" style="right:419.70px;top:316.00px;font-size:8.3px;line-height:8.3px;color:#3570b0;">82,950</div>
<div class="t" style="right:375.50px;top:316.00px;font-size:8.3px;line-height:8.3px;color:#3570b0;">85,800</div>
<div class="t" style="right:328.70px;top:316.00px;font-size:8.3px;line-height:8.3px;color:#3570b0;">90,600</div>
<div class="t" style="right:274.40px;top:316.00px;font-size:8.3px;line-height:8.3px;color:#3570b0;">92,850</div>
<div class="t" style="right:221.60px;top:316.00px;font-size:8.3px;line-height:8.3px;color:#3570b0;">99,450</div>
<div class="t" style="right:174.50px;top:316.00px;font-size:8.3px;line-height:8.3px;color:#3570b0;">80,850</div>
<div class="t" style="right:127.40px;top:316.00px;font-size:8.3px;line-height:8.3px;color:#3570b0;">81,900</div>
<div class="t" style="right:80.00px;top:316.00px;font-size:8.3px;line-height:8.3px;color:#3570b0;">83,100</div>
<div class="t" style="left:55.50px;top:328.35px;font-size:8.45px;line-height:8.45px;color:#3570b0;">Enterprise Systems</div>
<div class="t" style="right:761.50px;top:328.47px;font-size:8.3px;line-height:8.3px;color:#3570b0;">79,200</div>
<div class="t" style="right:714.70px;top:328.47px;font-size:8.3px;line-height:8.3px;color:#3570b0;">80,800</div>
<div class="t" style="right:668.00px;top:328.47px;font-size:8.3px;line-height:8.3px;color:#3570b0;">82,800</div>
<div class="t" style="right:621.00px;top:328.47px;font-size:8.3px;line-height:8.3px;color:#3570b0;">84,600</div>
<div class="t" style="right:567.80px;top:328.47px;font-size:8.3px;line-height:8.3px;color:#3570b0;">88,800</div>
<div class="t" style="right:520.60px;top:328.47px;font-size:8.3px;line-height:8.3px;color:#3570b0;">92,000</div>
<div class="t" style="right:473.30px;top:328.47px;font-size:8.3px;line-height:8.3px;color:#3570b0;">93,800</div>
<div class="t" style="right:419.70px;top:328.47px;font-size:8.3px;line-height:8.3px;color:#3570b0;">96,800</div>
<div class="t" style="right:375.50px;top:328.47px;font-size:8.3px;line-height:8.3px;color:#3570b0;">100,000</div>
<div class="t" style="right:328.70px;top:328.47px;font-size:8.3px;line-height:8.3px;color:#3570b0;">105,800</div>
<div class="t" style="right:274.40px;top:328.47px;font-size:8.3px;line-height:8.3px;color:#3570b0;">108,400</div>
<div class="t" style="right:221.60px;top:328.47px;font-size:8.3px;line-height:8.3px;color:#3570b0;">96,000</div>
<div class="t" style="right:174.50px;top:328.47px;font-size:8.3px;line-height:8.3px;color:#3570b0;">124,200</div>
<div class="t" style="right:127.40px;top:328.47px;font-size:8.3px;line-height:8.3px;color:#3570b0;">126,000</div>
<div class="t" style="right:80.00px;top:328.47px;font-size:8.3px;line-height:8.3px;color:#3570b0;">127,800</div>
<div class="t" style="left:55.50px;top:340.82px;font-size:8.45px;line-height:8.45px;color:#3570b0;">Innovation Lab</div>
<div class="t" style="right:761.50px;top:340.94px;font-size:8.3px;line-height:8.3px;color:#3570b0;">99,000</div>
<div class="t" style="right:714.70px;top:340.94px;font-size:8.3px;line-height:8.3px;color:#3570b0;">101,000</div>
<div class="t" style="right:668.00px;top:340.94px;font-size:8.3px;line-height:8.3px;color:#3570b0;">103,500</div>
<div class="t" style="right:621.00px;top:340.94px;font-size:8.3px;line-height:8.3px;color:#3570b0;">105,750</div>
<div class="t" style="right:567.80px;top:340.94px;font-size:8.3px;line-height:8.3px;color:#3570b0;">111,000</div>
<div class="t" style="right:520.60px;top:340.94px;font-size:8.3px;line-height:8.3px;color:#3570b0;">115,000</div>
<div class="t" style="right:473.30px;top:340.94px;font-size:8.3px;line-height:8.3px;color:#3570b0;">117,250</div>
<div class="t" style="right:419.70px;top:340.94px;font-size:8.3px;line-height:8.3px;color:#3570b0;">121,000</div>
<div class="t" style="right:375.50px;top:340.94px;font-size:8.3px;line-height:8.3px;color:#3570b0;">125,000</div>
<div class="t" style="right:328.70px;top:340.94px;font-size:8.3px;line-height:8.3px;color:#3570b0;">132,250</div>
<div class="t" style="right:274.40px;top:340.94px;font-size:8.3px;line-height:8.3px;color:#3570b0;">135,500</div>
<div class="t" style="right:221.60px;top:340.94px;font-size:8.3px;line-height:8.3px;color:#3570b0;">120,000</div>
<div class="t" style="right:174.50px;top:340.94px;font-size:8.3px;line-height:8.3px;color:#3570b0;">155,250</div>
<div class="t" style="right:127.40px;top:340.94px;font-size:8.3px;line-height:8.3px;color:#3570b0;">157,500</div>
<div class="t" style="right:80.00px;top:340.94px;font-size:8.3px;line-height:8.3px;color:#3570b0;">159,750</div>
<div class="t" style="left:55.50px;top:353.29px;font-size:8.45px;line-height:8.45px;color:#3570b0;">Transformation Partner</div>
<div class="t" style="right:761.50px;top:353.41px;font-size:8.3px;line-height:8.3px;color:#3570b0;">118,800</div>
<div class="t" style="right:714.70px;top:353.41px;font-size:8.3px;line-height:8.3px;color:#3570b0;">121,200</div>
<div class="t" style="right:668.00px;top:353.41px;font-size:8.3px;line-height:8.3px;color:#3570b0;">124,200</div>
<div class="t" style="right:621.00px;top:353.41px;font-size:8.3px;line-height:8.3px;color:#3570b0;">126,900</div>
<div class="t" style="right:567.80px;top:353.41px;font-size:8.3px;line-height:8.3px;color:#3570b0;">133,200</div>
<div class="t" style="right:520.60px;top:353.41px;font-size:8.3px;line-height:8.3px;color:#3570b0;">138,000</div>
<div class="t" style="right:473.30px;top:353.41px;font-size:8.3px;line-height:8.3px;color:#3570b0;">140,700</div>
<div class="t" style="right:419.70px;top:353.41px;font-size:8.3px;line-height:8.3px;color:#3570b0;">145,200</div>
<div class="t" style="right:375.50px;top:353.41px;font-size:8.3px;line-height:8.3px;color:#3570b0;">150,000</div>
<div class="t" style="right:328.70px;top:353.41px;font-size:8.3px;line-height:8.3px;color:#3570b0;">158,700</div>
<div class="t" style="right:274.40px;top:353.41px;font-size:8.3px;line-height:8.3px;color:#3570b0;">162,600</div>
<div class="t" style="right:221.60px;top:353.41px;font-size:8.3px;line-height:8.3px;color:#3570b0;">144,000</div>
<div class="t" style="right:174.50px;top:353.41px;font-size:8.3px;line-height:8.3px;color:#3570b0;">3,287,964</div>
<div class="t" style="right:127.40px;top:353.41px;font-size:8.3px;line-height:8.3px;color:#3570b0;">3,392,235</div>
<div class="t" style="right:80.00px;top:353.41px;font-size:8.3px;line-height:8.3px;color:#3570b0;">3,357,634</div>
<div class="t" style="left:42.90px;top:365.88px;font-size:8.3px;line-height:8.3px;color:#ffffff;font-weight:700;">Total Revenue</div>
<div class="t" style="right:761.50px;top:365.88px;font-size:8.3px;line-height:8.3px;color:#ffffff;">3,078,214</div>
<div class="t" style="right:714.70px;top:365.88px;font-size:8.3px;line-height:8.3px;color:#ffffff;">3,181,885</div>
<div class="t" style="right:668.00px;top:365.88px;font-size:8.3px;line-height:8.3px;color:#ffffff;">3,148,834</div>
<div class="t" style="right:621.00px;top:365.88px;font-size:8.3px;line-height:8.3px;color:#ffffff;">3,250,584</div>
<div class="t" style="right:567.80px;top:365.88px;font-size:8.3px;line-height:8.3px;color:#ffffff;">3,183,484</div>
<div class="t" style="right:520.60px;top:365.88px;font-size:8.3px;line-height:8.3px;color:#ffffff;">3,222,809</div>
<div class="t" style="right:473.30px;top:365.88px;font-size:8.3px;line-height:8.3px;color:#ffffff;">3,233,099</div>
<div class="t" style="right:419.70px;top:365.88px;font-size:8.3px;line-height:8.3px;color:#ffffff;">3,268,789</div>
<div class="t" style="right:375.50px;top:365.88px;font-size:8.3px;line-height:8.3px;color:#ffffff;">3,295,644</div>
<div class="t" style="right:328.70px;top:365.88px;font-size:8.3px;line-height:8.3px;color:#ffffff;">3,360,764</div>
<div class="t" style="right:274.40px;top:365.88px;font-size:8.3px;line-height:8.3px;color:#ffffff;">3,384,959</div>
<div class="t" style="right:221.60px;top:365.88px;font-size:8.3px;line-height:8.3px;color:#ffffff;">3,362,774</div>
<div class="t" style="right:174.50px;top:365.88px;font-size:8.3px;line-height:8.3px;color:#ffffff;">6,389,628</div>
<div class="t" style="right:127.40px;top:365.88px;font-size:8.3px;line-height:8.3px;color:#ffffff;">6,595,470</div>
<div class="t" style="right:80.00px;top:365.88px;font-size:8.3px;line-height:8.3px;color:#ffffff;">6,523,568</div>
<div class="t" style="right:32.60px;top:365.88px;font-size:8.3px;line-height:8.3px;color:#ffffff;">38,971,839</div>
<div class="t" style="left:42.90px;top:378.35px;font-size:8.3px;line-height:8.3px;color:#e8eef9;font-weight:700;">Misc COGS</div>
<div class="t" style="right:761.50px;top:378.35px;font-size:8.3px;line-height:8.3px;color:#dfe7f6;">(5,665)</div>
<div class="t" style="right:714.70px;top:378.35px;font-size:8.3px;line-height:8.3px;color:#dfe7f6;">(5,665)</div>
<div class="t" style="right:668.00px;top:378.35px;font-size:8.3px;line-height:8.3px;color:#dfe7f6;">(5,665)</div>
<div class="t" style="right:621.00px;top:378.35px;font-size:8.3px;line-height:8.3px;color:#dfe7f6;">(5,665)</div>
<div class="t" style="right:567.80px;top:378.35px;font-size:8.3px;line-height:8.3px;color:#dfe7f6;">(5,665)</div>
<div class="t" style="right:520.60px;top:378.35px;font-size:8.3px;line-height:8.3px;color:#dfe7f6;">(5,665)</div>
<div class="t" style="right:473.30px;top:378.35px;font-size:8.3px;line-height:8.3px;color:#dfe7f6;">(5,665)</div>
<div class="t" style="right:419.70px;top:378.35px;font-size:8.3px;line-height:8.3px;color:#dfe7f6;">(5,665)</div>
<div class="t" style="right:375.50px;top:378.35px;font-size:8.3px;line-height:8.3px;color:#dfe7f6;">(5,665)</div>
<div class="t" style="right:328.70px;top:378.35px;font-size:8.3px;line-height:8.3px;color:#dfe7f6;">(5,665)</div>
<div class="t" style="right:274.40px;top:378.35px;font-size:8.3px;line-height:8.3px;color:#dfe7f6;">(5,665)</div>
<div class="t" style="right:221.60px;top:378.35px;font-size:8.3px;line-height:8.3px;color:#dfe7f6;">(5,665)</div>
<div class="t" style="right:174.50px;top:378.35px;font-size:8.3px;line-height:8.3px;color:#dfe7f6;">(5,665)</div>
<div class="t" style="right:127.40px;top:378.35px;font-size:8.3px;line-height:8.3px;color:#dfe7f6;">(5,665)</div>
<div class="t" style="right:80.00px;top:378.35px;font-size:8.3px;line-height:8.3px;color:#dfe7f6;">(5,665)</div>
<div class="t" style="right:32.60px;top:378.35px;font-size:8.3px;line-height:8.3px;color:#dfe7f6;">(67,980)</div>
<div class="t" style="left:55.50px;top:390.70px;font-size:8.45px;line-height:8.45px;color:#3570b0;">3rd Party Maintenance</div>
<div class="t" style="right:761.50px;top:390.82px;font-size:8.3px;line-height:8.3px;color:#3570b0;">(5,500)</div>
<div class="t" style="right:714.70px;top:390.82px;font-size:8.3px;line-height:8.3px;color:#3570b0;">(5,500)</div>
<div class="t" style="right:668.00px;top:390.82px;font-size:8.3px;line-height:8.3px;color:#3570b0;">(5,500)</div>
<div class="t" style="right:621.00px;top:390.82px;font-size:8.3px;line-height:8.3px;color:#3570b0;">(5,500)</div>
<div class="t" style="right:567.80px;top:390.82px;font-size:8.3px;line-height:8.3px;color:#3570b0;">(5,500)</div>
<div class="t" style="right:520.60px;top:390.82px;font-size:8.3px;line-height:8.3px;color:#3570b0;">(5,500)</div>
<div class="t" style="right:473.30px;top:390.82px;font-size:8.3px;line-height:8.3px;color:#3570b0;">(5,500)</div>
<div class="t" style="right:419.70px;top:390.82px;font-size:8.3px;line-height:8.3px;color:#3570b0;">(5,500)</div>
<div class="t" style="right:375.50px;top:390.82px;font-size:8.3px;line-height:8.3px;color:#3570b0;">(5,500)</div>
<div class="t" style="right:328.70px;top:390.82px;font-size:8.3px;line-height:8.3px;color:#3570b0;">(5,500)</div>
<div class="t" style="right:274.40px;top:390.82px;font-size:8.3px;line-height:8.3px;color:#3570b0;">(5,500)</div>
<div class="t" style="right:221.60px;top:390.82px;font-size:8.3px;line-height:8.3px;color:#3570b0;">(5,500)</div>
<div class="t" style="right:174.50px;top:390.82px;font-size:8.3px;line-height:8.3px;color:#3570b0;">(5,500)</div>
<div class="t" style="right:127.40px;top:390.82px;font-size:8.3px;line-height:8.3px;color:#3570b0;">(5,500)</div>
<div class="t" style="right:80.00px;top:390.82px;font-size:8.3px;line-height:8.3px;color:#3570b0;">(5,500)</div>
<div class="t" style="right:32.60px;top:390.82px;font-size:8.3px;line-height:8.3px;color:#3570b0;">(66,000)</div>
<div class="t" style="left:55.50px;top:403.17px;font-size:8.45px;line-height:8.45px;color:#3570b0;">Misc Downtime</div>
<div class="t" style="right:761.50px;top:403.29px;font-size:8.3px;line-height:8.3px;color:#3570b0;">(45)</div>
<div class="t" style="right:714.70px;top:403.29px;font-size:8.3px;line-height:8.3px;color:#3570b0;">(45)</div>
<div class="t" style="right:668.00px;top:403.29px;font-size:8.3px;line-height:8.3px;color:#3570b0;">(45)</div>
<div class="t" style="right:621.00px;top:403.29px;font-size:8.3px;line-height:8.3px;color:#3570b0;">(45)</div>
<div class="t" style="right:567.80px;top:403.29px;font-size:8.3px;line-height:8.3px;color:#3570b0;">(45)</div>
<div class="t" style="right:520.60px;top:403.29px;font-size:8.3px;line-height:8.3px;color:#3570b0;">(45)</div>
<div class="t" style="right:473.30px;top:403.29px;font-size:8.3px;line-height:8.3px;color:#3570b0;">(45)</div>
<div class="t" style="right:419.70px;top:403.29px;font-size:8.3px;line-height:8.3px;color:#3570b0;">(45)</div>
<div class="t" style="right:375.50px;top:403.29px;font-size:8.3px;line-height:8.3px;color:#3570b0;">(45)</div>
<div class="t" style="right:328.70px;top:403.29px;font-size:8.3px;line-height:8.3px;color:#3570b0;">(45)</div>
<div class="t" style="right:274.40px;top:403.29px;font-size:8.3px;line-height:8.3px;color:#3570b0;">(45)</div>
<div class="t" style="right:221.60px;top:403.29px;font-size:8.3px;line-height:8.3px;color:#3570b0;">(45)</div>
<div class="t" style="right:174.50px;top:403.29px;font-size:8.3px;line-height:8.3px;color:#3570b0;">(45)</div>
<div class="t" style="right:127.40px;top:403.29px;font-size:8.3px;line-height:8.3px;color:#3570b0;">(45)</div>
<div class="t" style="right:80.00px;top:403.29px;font-size:8.3px;line-height:8.3px;color:#3570b0;">(45)</div>
<div class="t" style="right:32.60px;top:403.29px;font-size:8.3px;line-height:8.3px;color:#3570b0;">(540)</div>
<div class="t" style="left:55.50px;top:415.64px;font-size:8.45px;line-height:8.45px;color:#3570b0;">Legal Fees</div>
<div class="t" style="right:761.50px;top:415.76px;font-size:8.3px;line-height:8.3px;color:#3570b0;">(50)</div>
<div class="t" style="right:714.70px;top:415.76px;font-size:8.3px;line-height:8.3px;color:#3570b0;">(50)</div>
<div class="t" style="right:668.00px;top:415.76px;font-size:8.3px;line-height:8.3px;color:#3570b0;">(50)</div>
<div class="t" style="right:621.00px;top:415.76px;font-size:8.3px;line-height:8.3px;color:#3570b0;">(50)</div>
<div class="t" style="right:567.80px;top:415.76px;font-size:8.3px;line-height:8.3px;color:#3570b0;">(50)</div>
<div class="t" style="right:520.60px;top:415.76px;font-size:8.3px;line-height:8.3px;color:#3570b0;">(50)</div>
<div class="t" style="right:473.30px;top:415.76px;font-size:8.3px;line-height:8.3px;color:#3570b0;">(50)</div>
<div class="t" style="right:419.70px;top:415.76px;font-size:8.3px;line-height:8.3px;color:#3570b0;">(50)</div>
<div class="t" style="right:375.50px;top:415.76px;font-size:8.3px;line-height:8.3px;color:#3570b0;">(50)</div>
<div class="t" style="right:328.70px;top:415.76px;font-size:8.3px;line-height:8.3px;color:#3570b0;">(50)</div>
<div class="t" style="right:274.40px;top:415.76px;font-size:8.3px;line-height:8.3px;color:#3570b0;">(50)</div>
<div class="t" style="right:221.60px;top:415.76px;font-size:8.3px;line-height:8.3px;color:#3570b0;">(50)</div>
<div class="t" style="right:174.50px;top:415.76px;font-size:8.3px;line-height:8.3px;color:#3570b0;">(50)</div>
<div class="t" style="right:127.40px;top:415.76px;font-size:8.3px;line-height:8.3px;color:#3570b0;">(50)</div>
<div class="t" style="right:80.00px;top:415.76px;font-size:8.3px;line-height:8.3px;color:#3570b0;">(50)</div>
<div class="t" style="right:32.60px;top:415.76px;font-size:8.3px;line-height:8.3px;color:#3570b0;">(600)</div>
<div class="t" style="left:55.50px;top:428.11px;font-size:8.45px;line-height:8.45px;color:#3570b0;">Licensing</div>
<div class="t" style="right:761.50px;top:428.23px;font-size:8.3px;line-height:8.3px;color:#3570b0;">(70)</div>
<div class="t" style="right:714.70px;top:428.23px;font-size:8.3px;line-height:8.3px;color:#3570b0;">(70)</div>
<div class="t" style="right:668.00px;top:428.23px;font-size:8.3px;line-height:8.3px;color:#3570b0;">(70)</div>
<div class="t" style="right:621.00px;top:428.23px;font-size:8.3px;line-height:8.3px;color:#3570b0;">(70)</div>
<div class="t" style="right:567.80px;top:428.23px;font-size:8.3px;line-height:8.3px;color:#3570b0;">(70)</div>
<div class="t" style="right:520.60px;top:428.23px;font-size:8.3px;line-height:8.3px;color:#3570b0;">(70)</div>
<div class="t" style="right:473.30px;top:428.23px;font-size:8.3px;line-height:8.3px;color:#3570b0;">(70)</div>
<div class="t" style="right:419.70px;top:428.23px;font-size:8.3px;line-height:8.3px;color:#3570b0;">(70)</div>
<div class="t" style="right:375.50px;top:428.23px;font-size:8.3px;line-height:8.3px;color:#3570b0;">(70)</div>
<div class="t" style="right:328.70px;top:428.23px;font-size:8.3px;line-height:8.3px;color:#3570b0;">(70)</div>
<div class="t" style="right:274.40px;top:428.23px;font-size:8.3px;line-height:8.3px;color:#3570b0;">(70)</div>
<div class="t" style="right:221.60px;top:428.23px;font-size:8.3px;line-height:8.3px;color:#3570b0;">(70)</div>
<div class="t" style="right:174.50px;top:428.23px;font-size:8.3px;line-height:8.3px;color:#3570b0;">(70)</div>
<div class="t" style="right:127.40px;top:428.23px;font-size:8.3px;line-height:8.3px;color:#3570b0;">(70)</div>
<div class="t" style="right:80.00px;top:428.23px;font-size:8.3px;line-height:8.3px;color:#3570b0;">(70)</div>
<div class="t" style="right:32.60px;top:428.23px;font-size:8.3px;line-height:8.3px;color:#3570b0;">(840)</div>
<div class="t" style="left:55.50px;top:440.58px;font-size:8.45px;line-height:8.45px;color:#3570b0;">COGS_Placeholder5</div>
<div class="t" style="right:765.00px;top:440.70px;font-size:8.3px;line-height:8.3px;color:#a0a0a0;">-</div>
<div class="t" style="right:718.20px;top:440.70px;font-size:8.3px;line-height:8.3px;color:#a0a0a0;">-</div>
<div class="t" style="right:671.50px;top:440.70px;font-size:8.3px;line-height:8.3px;color:#a0a0a0;">-</div>
<div class="t" style="right:624.50px;top:440.70px;font-size:8.3px;line-height:8.3px;color:#a0a0a0;">-</div>
<div class="t" style="right:571.30px;top:440.70px;font-size:8.3px;line-height:8.3px;color:#a0a0a0;">-</div>
<div class="t" style="right:524.10px;top:440.70px;font-size:8.3px;line-height:8.3px;color:#a0a0a0;">-</div>
<div class="t" style="right:476.80px;top:440.70px;font-size:8.3px;line-height:8.3px;color:#a0a0a0;">-</div>
<div class="t" style="right:423.20px;top:440.70px;font-size:8.3px;line-height:8.3px;color:#a0a0a0;">-</div>
<div class="t" style="right:379.00px;top:440.70px;font-size:8.3px;line-height:8.3px;color:#a0a0a0;">-</div>
<div class="t" style="right:332.20px;top:440.70px;font-size:8.3px;line-height:8.3px;color:#a0a0a0;">-</div>
<div class="t" style="right:277.90px;top:440.70px;font-size:8.3px;line-height:8.3px;color:#a0a0a0;">-</div>
<div class="t" style="right:225.10px;top:440.70px;font-size:8.3px;line-height:8.3px;color:#a0a0a0;">-</div>
<div class="t" style="right:178.00px;top:440.70px;font-size:8.3px;line-height:8.3px;color:#a0a0a0;">-</div>
<div class="t" style="right:130.90px;top:440.70px;font-size:8.3px;line-height:8.3px;color:#a0a0a0;">-</div>
<div class="t" style="right:83.50px;top:440.70px;font-size:8.3px;line-height:8.3px;color:#a0a0a0;">-</div>
<div class="t" style="right:36.10px;top:440.70px;font-size:8.3px;line-height:8.3px;color:#a0a0a0;">-</div>
<div class="t" style="left:55.50px;top:453.05px;font-size:8.45px;line-height:8.45px;color:#3570b0;">COGS_Placeholder7</div>
<div class="t" style="right:765.00px;top:453.17px;font-size:8.3px;line-height:8.3px;color:#a0a0a0;">-</div>
<div class="t" style="right:718.20px;top:453.17px;font-size:8.3px;line-height:8.3px;color:#a0a0a0;">-</div>
<div class="t" style="right:671.50px;top:453.17px;font-size:8.3px;line-height:8.3px;color:#a0a0a0;">-</div>
<div class="t" style="right:624.50px;top:453.17px;font-size:8.3px;line-height:8.3px;color:#a0a0a0;">-</div>
<div class="t" style="right:571.30px;top:453.17px;font-size:8.3px;line-height:8.3px;color:#a0a0a0;">-</div>
<div class="t" style="right:524.10px;top:453.17px;font-size:8.3px;line-height:8.3px;color:#a0a0a0;">-</div>
<div class="t" style="right:476.80px;top:453.17px;font-size:8.3px;line-height:8.3px;color:#a0a0a0;">-</div>
<div class="t" style="right:423.20px;top:453.17px;font-size:8.3px;line-height:8.3px;color:#a0a0a0;">-</div>
<div class="t" style="right:379.00px;top:453.17px;font-size:8.3px;line-height:8.3px;color:#a0a0a0;">-</div>
<div class="t" style="right:332.20px;top:453.17px;font-size:8.3px;line-height:8.3px;color:#a0a0a0;">-</div>
<div class="t" style="right:277.90px;top:453.17px;font-size:8.3px;line-height:8.3px;color:#a0a0a0;">-</div>
<div class="t" style="right:225.10px;top:453.17px;font-size:8.3px;line-height:8.3px;color:#a0a0a0;">-</div>
<div class="t" style="right:178.00px;top:453.17px;font-size:8.3px;line-height:8.3px;color:#a0a0a0;">-</div>
<div class="t" style="right:130.90px;top:453.17px;font-size:8.3px;line-height:8.3px;color:#a0a0a0;">-</div>
<div class="t" style="right:83.50px;top:453.17px;font-size:8.3px;line-height:8.3px;color:#a0a0a0;">-</div>
<div class="t" style="right:36.10px;top:453.17px;font-size:8.3px;line-height:8.3px;color:#a0a0a0;">-</div>
<div class="t" style="left:42.90px;top:478.57px;font-size:8.3px;line-height:8.3px;color:#1a1a1a;font-weight:700;letter-spacing:-0.25px;">GROSS MARGIN</div>
<div class="t" style="right:761.50px;top:478.57px;font-size:8.3px;line-height:8.3px;color:#1a1a1a;">3,072,549</div>
<div class="t" style="right:714.70px;top:478.57px;font-size:8.3px;line-height:8.3px;color:#1a1a1a;">3,176,220</div>
<div class="t" style="right:668.00px;top:478.57px;font-size:8.3px;line-height:8.3px;color:#1a1a1a;">3,143,169</div>
<div class="t" style="right:621.00px;top:478.57px;font-size:8.3px;line-height:8.3px;color:#1a1a1a;">3,244,919</div>
<div class="t" style="right:567.80px;top:478.57px;font-size:8.3px;line-height:8.3px;color:#1a1a1a;">3,177,819</div>
<div class="t" style="right:520.60px;top:478.57px;font-size:8.3px;line-height:8.3px;color:#1a1a1a;">3,217,144</div>
<div class="t" style="right:473.30px;top:478.57px;font-size:8.3px;line-height:8.3px;color:#1a1a1a;">3,227,434</div>
<div class="t" style="right:419.70px;top:478.57px;font-size:8.3px;line-height:8.3px;color:#1a1a1a;">3,263,124</div>
<div class="t" style="right:375.50px;top:478.57px;font-size:8.3px;line-height:8.3px;color:#1a1a1a;">3,289,979</div>
<div class="t" style="right:328.70px;top:478.57px;font-size:8.3px;line-height:8.3px;color:#1a1a1a;">3,355,099</div>
<div class="t" style="right:274.40px;top:478.57px;font-size:8.3px;line-height:8.3px;color:#1a1a1a;">3,379,294</div>
<div class="t" style="right:221.60px;top:478.57px;font-size:8.3px;line-height:8.3px;color:#1a1a1a;">3,357,109</div>
<div class="t" style="right:174.50px;top:478.57px;font-size:8.3px;line-height:8.3px;color:#1a1a1a;">6,383,963</div>
<div class="t" style="right:127.40px;top:478.57px;font-size:8.3px;line-height:8.3px;color:#1a1a1a;">6,589,805</div>
<div class="t" style="right:80.00px;top:478.57px;font-size:8.3px;line-height:8.3px;color:#1a1a1a;">6,517,903</div>
<div class="t" style="right:32.60px;top:478.57px;font-size:8.3px;line-height:8.3px;color:#1a1a1a;">38,903,859</div>
<div class="t" style="left:42.90px;top:504.27px;font-size:8.3px;line-height:8.3px;color:#2a62a0;font-weight:700;">Variable Expenses</div>
<div class="t" style="left:55.50px;top:517.35px;font-size:8.45px;line-height:8.45px;color:#3570b0;">Transaction Fees</div>
<div class="t" style="right:761.50px;top:517.47px;font-size:8.3px;line-height:8.3px;color:#3570b0;">(975)</div>
<div class="t" style="right:714.70px;top:517.47px;font-size:8.3px;line-height:8.3px;color:#3570b0;">(975)</div>
<div class="t" style="right:668.00px;top:517.47px;font-size:8.3px;line-height:8.3px;color:#3570b0;">(975)</div>
<div class="t" style="right:621.00px;top:517.47px;font-size:8.3px;line-height:8.3px;color:#3570b0;">(975)</div>
<div class="t" style="right:567.80px;top:517.47px;font-size:8.3px;line-height:8.3px;color:#3570b0;">(975)</div>
<div class="t" style="right:520.60px;top:517.47px;font-size:8.3px;line-height:8.3px;color:#3570b0;">(975)</div>
<div class="t" style="right:473.30px;top:517.47px;font-size:8.3px;line-height:8.3px;color:#3570b0;">(975)</div>
<div class="t" style="right:419.70px;top:517.47px;font-size:8.3px;line-height:8.3px;color:#3570b0;">(975)</div>
<div class="t" style="right:375.50px;top:517.47px;font-size:8.3px;line-height:8.3px;color:#3570b0;">(975)</div>
<div class="t" style="right:328.70px;top:517.47px;font-size:8.3px;line-height:8.3px;color:#3570b0;">(975)</div>
<div class="t" style="right:274.40px;top:517.47px;font-size:8.3px;line-height:8.3px;color:#3570b0;">(975)</div>
<div class="t" style="right:221.60px;top:517.47px;font-size:8.3px;line-height:8.3px;color:#3570b0;">(975)</div>
<div class="t" style="right:174.50px;top:517.47px;font-size:8.3px;line-height:8.3px;color:#3570b0;">(975)</div>
<div class="t" style="right:127.40px;top:517.47px;font-size:8.3px;line-height:8.3px;color:#3570b0;">(975)</div>
<div class="t" style="right:80.00px;top:517.47px;font-size:8.3px;line-height:8.3px;color:#3570b0;">(975)</div>
<div class="t" style="right:32.60px;top:517.47px;font-size:8.3px;line-height:8.3px;color:#3570b0;">(11,700)</div>
<div class="t" style="left:55.50px;top:530.45px;font-size:8.45px;line-height:8.45px;color:#3570b0;">3rd Party HR</div>
<div class="t" style="right:761.50px;top:530.57px;font-size:8.3px;line-height:8.3px;color:#3570b0;">(300)</div>
<div class="t" style="right:714.70px;top:530.57px;font-size:8.3px;line-height:8.3px;color:#3570b0;">(300)</div>
<div class="t" style="right:668.00px;top:530.57px;font-size:8.3px;line-height:8.3px;color:#3570b0;">(300)</div>
<div class="t" style="right:621.00px;top:530.57px;font-size:8.3px;line-height:8.3px;color:#3570b0;">(300)</div>
<div class="t" style="right:567.80px;top:530.57px;font-size:8.3px;line-height:8.3px;color:#3570b0;">(300)</div>
<div class="t" style="right:520.60px;top:530.57px;font-size:8.3px;line-height:8.3px;color:#3570b0;">(300)</div>
<div class="t" style="right:473.30px;top:530.57px;font-size:8.3px;line-height:8.3px;color:#3570b0;">(300)</div>
<div class="t" style="right:419.70px;top:530.57px;font-size:8.3px;line-height:8.3px;color:#3570b0;">(300)</div>
<div class="t" style="right:375.50px;top:530.57px;font-size:8.3px;line-height:8.3px;color:#3570b0;">(300)</div>
<div class="t" style="right:328.70px;top:530.57px;font-size:8.3px;line-height:8.3px;color:#3570b0;">(300)</div>
<div class="t" style="right:274.40px;top:530.57px;font-size:8.3px;line-height:8.3px;color:#3570b0;">(300)</div>
<div class="t" style="right:221.60px;top:530.57px;font-size:8.3px;line-height:8.3px;color:#3570b0;">(300)</div>
<div class="t" style="right:174.50px;top:530.57px;font-size:8.3px;line-height:8.3px;color:#3570b0;">(300)</div>
<div class="t" style="right:127.40px;top:530.57px;font-size:8.3px;line-height:8.3px;color:#3570b0;">(300)</div>
<div class="t" style="right:80.00px;top:530.57px;font-size:8.3px;line-height:8.3px;color:#3570b0;">(300)</div>
<div class="t" style="right:32.60px;top:530.57px;font-size:8.3px;line-height:8.3px;color:#3570b0;">(3,600)</div>
<div class="t" style="left:55.50px;top:543.35px;font-size:8.45px;line-height:8.45px;color:#3570b0;">Maintenance</div>
<div class="t" style="right:761.50px;top:543.47px;font-size:8.3px;line-height:8.3px;color:#3570b0;">(300)</div>
<div class="t" style="right:714.70px;top:543.47px;font-size:8.3px;line-height:8.3px;color:#3570b0;">(300)</div>
<div class="t" style="right:668.00px;top:543.47px;font-size:8.3px;line-height:8.3px;color:#3570b0;">(300)</div>
<div class="t" style="right:621.00px;top:543.47px;font-size:8.3px;line-height:8.3px;color:#3570b0;">(300)</div>
<div class="t" style="right:567.80px;top:543.47px;font-size:8.3px;line-height:8.3px;color:#3570b0;">(300)</div>
<div class="t" style="right:520.60px;top:543.47px;font-size:8.3px;line-height:8.3px;color:#3570b0;">(300)</div>
<div class="t" style="right:473.30px;top:543.47px;font-size:8.3px;line-height:8.3px;color:#3570b0;">(300)</div>
<div class="t" style="right:419.70px;top:543.47px;font-size:8.3px;line-height:8.3px;color:#3570b0;">(300)</div>
<div class="t" style="right:375.50px;top:543.47px;font-size:8.3px;line-height:8.3px;color:#3570b0;">(300)</div>
<div class="t" style="right:328.70px;top:543.47px;font-size:8.3px;line-height:8.3px;color:#3570b0;">(300)</div>
<div class="t" style="right:274.40px;top:543.47px;font-size:8.3px;line-height:8.3px;color:#3570b0;">(300)</div>
<div class="t" style="right:221.60px;top:543.47px;font-size:8.3px;line-height:8.3px;color:#3570b0;">(300)</div>
<div class="t" style="right:174.50px;top:543.47px;font-size:8.3px;line-height:8.3px;color:#3570b0;">(300)</div>
<div class="t" style="right:127.40px;top:543.47px;font-size:8.3px;line-height:8.3px;color:#3570b0;">(300)</div>
<div class="t" style="right:80.00px;top:543.47px;font-size:8.3px;line-height:8.3px;color:#3570b0;">(300)</div>
<div class="t" style="right:32.60px;top:543.47px;font-size:8.3px;line-height:8.3px;color:#3570b0;">(3,600)</div>
<div class="t" style="left:55.50px;top:556.95px;font-size:8.45px;line-height:8.45px;color:#3570b0;">Hosting</div>
<div class="t" style="right:761.50px;top:557.07px;font-size:8.3px;line-height:8.3px;color:#3570b0;">(215)</div>
<div class="t" style="right:714.70px;top:557.07px;font-size:8.3px;line-height:8.3px;color:#3570b0;">(215)</div>
<div class="t" style="right:668.00px;top:557.07px;font-size:8.3px;line-height:8.3px;color:#3570b0;">(215)</div>
<div class="t" style="right:621.00px;top:557.07px;font-size:8.3px;line-height:8.3px;color:#3570b0;">(215)</div>
<div class="t" style="right:567.80px;top:557.07px;font-size:8.3px;line-height:8.3px;color:#3570b0;">(215)</div>
<div class="t" style="right:520.60px;top:557.07px;font-size:8.3px;line-height:8.3px;color:#3570b0;">(215)</div>
<div class="t" style="right:473.30px;top:557.07px;font-size:8.3px;line-height:8.3px;color:#3570b0;">(215)</div>
<div class="t" style="right:419.70px;top:557.07px;font-size:8.3px;line-height:8.3px;color:#3570b0;">(215)</div>
<div class="t" style="right:375.50px;top:557.07px;font-size:8.3px;line-height:8.3px;color:#3570b0;">(215)</div>
<div class="t" style="right:328.70px;top:557.07px;font-size:8.3px;line-height:8.3px;color:#3570b0;">(215)</div>
<div class="t" style="right:274.40px;top:557.07px;font-size:8.3px;line-height:8.3px;color:#3570b0;">(215)</div>
<div class="t" style="right:221.60px;top:557.07px;font-size:8.3px;line-height:8.3px;color:#3570b0;">(215)</div>
<div class="t" style="right:174.50px;top:557.07px;font-size:8.3px;line-height:8.3px;color:#3570b0;">(215)</div>
<div class="t" style="right:127.40px;top:557.07px;font-size:8.3px;line-height:8.3px;color:#3570b0;">(215)</div>
<div class="t" style="right:80.00px;top:557.07px;font-size:8.3px;line-height:8.3px;color:#3570b0;">(215)</div>
<div class="t" style="right:32.60px;top:557.07px;font-size:8.3px;line-height:8.3px;color:#3570b0;">(2,580)</div>
<div class="r" style="left:987.5px;top:49px;width:12.5px;height:510px;background:#fbfbfb;border-left:1px solid #e3e3e3;box-sizing:border-box;"></div>
<svg class="r" style="left:990px;top:52px" width="8" height="6" viewBox="0 0 8 6"><path d="M4 0.5 L7.5 5.5 H0.5 Z" fill="#606060"/></svg>
<div class="r" style="left:991px;top:62.5px;width:6px;height:99.0px;background:#878787;border-radius:3px;"></div>
<svg class="r" style="left:990px;top:552px" width="8" height="6" viewBox="0 0 8 6"><path d="M4 5.5 L7.5 0.5 H0.5 Z" fill="#606060"/></svg>
<div class="r" style="left:0px;top:558.6px;width:1000px;height:17.399999999999977px;background:#ebebeb;"></div>
<svg class="r" style="left:17px;top:566px" width="5" height="7" viewBox="0 0 5 7"><path d="M4.2 0.5 L1 3.5 L4.2 6.5" fill="none" stroke="#b8b8b8" stroke-width="1.1"/></svg>
<svg class="r" style="left:37.5px;top:566px" width="5" height="7" viewBox="0 0 5 7"><path d="M0.8 0.5 L4 3.5 L0.8 6.5" fill="none" stroke="#555555" stroke-width="1.1"/></svg>
<div class="t" style="left:79.00px;top:565.90px;font-size:9.1px;line-height:9.1px;color:#2b2b2b;letter-spacing:-0.1px;">How To</div>
<div class="r" style="left:121px;top:558.6px;width:71.5px;height:17.399999999999977px;background:#fbf9d3;"></div>
<div class="t" style="left:127.50px;top:565.90px;font-size:9.1px;line-height:9.1px;color:#2b2b2b;letter-spacing:-0.1px;">2026 Accounts</div>
<div class="r" style="left:198.5px;top:558.6px;width:105.5px;height:17.399999999999977px;background:#e5e5ea;"></div>
<div class="t" style="left:204.80px;top:565.90px;font-size:9.1px;line-height:9.1px;color:#2b2b2b;letter-spacing:-0.1px;">2026 MRR Dashboard</div>
<div class="r" style="left:304px;top:558.6px;width:43.5px;height:17.399999999999977px;background:#ffffff;"></div>
<div class="t" style="left:310.00px;top:563.04px;font-size:8.7px;line-height:8.7px;color:#1a1a1a;font-weight:700;">IS 2026</div>
<div class="r" style="left:310px;top:573.8px;width:30px;height:1.400000000000091px;background:#217346;"></div>
<div class="r" style="left:351px;top:558.6px;width:44px;height:17.399999999999977px;background:#fbf9d3;"></div>
<div class="t" style="left:356.00px;top:565.90px;font-size:9.1px;line-height:9.1px;color:#2b2b2b;letter-spacing:-0.1px;">CF 2026</div>
<div class="r" style="left:396px;top:558.6px;width:50px;height:17.399999999999977px;background:#e5e5ea;"></div>
<div class="t" style="left:406.00px;top:565.90px;font-size:9.1px;line-height:9.1px;color:#2b2b2b;letter-spacing:-0.1px;">BS 2026</div>
<div class="t" style="left:456.00px;top:565.90px;font-size:9.1px;line-height:9.1px;color:#2b2b2b;letter-spacing:-0.1px;">Statements Summary 2026</div>
<div class="r" style="left:576px;top:558.6px;width:61.5px;height:17.399999999999977px;background:#fbf9d3;"></div>
<div class="t" style="left:582.50px;top:565.90px;font-size:9.1px;line-height:9.1px;color:#2b2b2b;letter-spacing:-0.1px;">CAPEX 2026</div>
<div class="r" style="left:642.5px;top:558.6px;width:56.5px;height:17.399999999999977px;background:#fbf9d3;"></div>
<div class="t" style="left:648.75px;top:565.90px;font-size:9.1px;line-height:9.1px;color:#2b2b2b;letter-spacing:-0.1px;">OPEX 2026</div>
<div class="r" style="left:704px;top:558.6px;width:71px;height:17.399999999999977px;background:#fbf9d3;"></div>
<div class="t" style="left:711.00px;top:565.90px;font-size:9.1px;line-height:9.1px;color:#2b2b2b;letter-spacing:-0.1px;">2027 Accounts</div>
<div class="r" style="left:782.5px;top:558.6px;width:97.5px;height:17.399999999999977px;background:#fbf9d3;"></div>
<div class="t" style="left:787.50px;top:565.90px;font-size:9.1px;line-height:9.1px;color:#2b2b2b;letter-spacing:-0.1px;">2027 MRR Dashboard</div>
<svg class="r" style="left:885.5px;top:567px" width="10" height="4" viewBox="0 0 10 4"><path d="M0.5 2 H9.5" stroke="#444" stroke-width="1.6" stroke-dasharray="2.2 1"/></svg>
<svg class="r" style="left:906.5px;top:564.5px" width="9" height="9" viewBox="0 0 9 9"><path d="M4.5 0.5 V8.5 M0.5 4.5 H8.5" stroke="#333" stroke-width="1.1"/></svg>
<svg class="r" style="left:930.5px;top:564px" width="3" height="10" viewBox="0 0 3 10"><circle cx="1.5" cy="1.5" r="0.9" fill="#333"/><circle cx="1.5" cy="5" r="0.9" fill="#333"/><circle cx="1.5" cy="8.5" r="0.9" fill="#333"/></svg>
<svg class="r" style="left:945px;top:565px" width="42" height="9" viewBox="0 0 42 9"><path d="M4.5 1 L1 4.5 L4.5 8 Z" fill="#555"/><rect x="8.5" y="1.8" width="14" height="5.4" rx="2.7" fill="#606060"/><path d="M35.5 1 L39 4.5 L35.5 8 Z" fill="#555"/></svg>
<div class="r" style="left:0px;top:576px;width:1000px;height:16px;background:#f1f1f1;"></div>
<div class="t" style="left:7.80px;top:584.17px;font-size:6.3px;line-height:6.3px;color:#444444;">Ready</div>
<svg class="r" style="left:39.5px;top:582px" width="10" height="9" viewBox="0 0 10 9"><rect x="0" y="0.5" width="10" height="8" fill="#9a9a9a"/><rect x="0" y="0.5" width="10" height="2" fill="#5a5a5a"/><circle cx="6.5" cy="5.6" r="2.4" fill="#f2f2f2"/><circle cx="6.5" cy="5.6" r="1.3" fill="#1a1a1a"/></svg>
<svg class="r" style="left:60px;top:582px" width="10" height="9" viewBox="0 0 10 9"><path d="M0.5 2 H8.5 M4.5 0.3 V2" stroke="#555" stroke-width="1.1" fill="none"/><path d="M2.2 2 L1.6 8.5 M4 2.5 V8.5" stroke="#666" stroke-width="1" fill="none"/><path d="M5.3 5 L8.3 8.3 M8.3 5 L5.3 8.3" stroke="#555" stroke-width="0.9" fill="none"/></svg>
<div class="t" style="left:71.50px;top:583.87px;font-size:6.65px;line-height:6.65px;color:#222222;font-weight:700;">Accessibility: Investigate</div>
<div class="r" style="left:808px;top:578px;width:23px;height:14px;background:#e3e3e3;"></div>
<svg class="r" style="left:814px;top:580.5px" width="10" height="10" viewBox="0 0 10 10"><path d="M0.5 0.5 H9.5 V9.5 H0.5 Z M3.5 0.5 V9.5 M6.5 0.5 V9.5 M0.5 3.5 H9.5 M0.5 6.5 H9.5" fill="none" stroke="#555" stroke-width="1"/></svg>
<svg class="r" style="left:840px;top:580.5px" width="11" height="10" viewBox="0 0 11 10"><path d="M0.5 0.5 H10.5 V9.5 H0.5 Z M3 0.5 V9.5 M5.5 0.5 V9.5 M8 0.5 V9.5" fill="none" stroke="#555" stroke-width="1"/></svg>
<svg class="r" style="left:866.5px;top:580.5px" width="10" height="10" viewBox="0 0 10 10"><path d="M0.5 0.5 H9.5 V9.5 H0.5 Z M6.5 0.5 V6.5 H2.5 V9.5" fill="none" stroke="#555" stroke-width="1"/></svg>
<div class="r" style="left:888.5px;top:585.5px;width:4.5px;height:1.0px;background:#666;"></div>
<div class="r" style="left:895.5px;top:585px;width:66.5px;height:2px;background:#b4b4b4;"></div>
<div class="r" style="left:927px;top:582px;width:4px;height:8px;background:#444;border-radius:1px;"></div>
<div class="r" style="left:962.5px;top:585.5px;width:6.0px;height:1.0px;background:#777;"></div>
<div class="r" style="left:965px;top:583px;width:1px;height:6px;background:#777;"></div>
<div class="t" style="left:979.00px;top:584.17px;font-size:6.3px;line-height:6.3px;color:#444444;">100%</div>
</body></html>
